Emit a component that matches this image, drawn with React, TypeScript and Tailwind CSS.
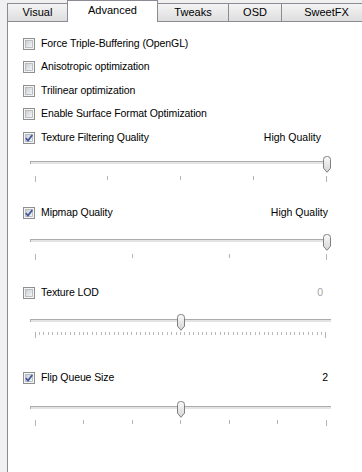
import React from "react";

// Win7-style "Advanced" tab page: checkboxes + trackbars

function Check({ checked }: { checked: boolean }) {
  return (
    <svg width="12" height="12" viewBox="0 0 12 12" className="shrink-0">
      <defs>
        <linearGradient id="cbFill" x1="0" y1="0" x2="1" y2="1">
          <stop offset="0" stopColor="#c9ccd1" />
          <stop offset="1" stopColor="#f7f7f7" />
        </linearGradient>
      </defs>
      <rect x="0.5" y="0.5" width="11" height="11" fill="#f4f4f4" stroke="#8e8f8f" />
      <rect x="2.5" y="2.5" width="7" height="7" fill="url(#cbFill)" stroke="#aeb2b8" strokeWidth="0.8" />
      {checked && (
        <path d="M2.8 6.1 L5 8.6 L9.3 3" fill="none" stroke="#40599a" strokeWidth="1.7" />
      )}
    </svg>
  );
}

function Thumb() {
  return (
    <svg width="10" height="17" viewBox="0 0 10 17">
      <defs>
        <linearGradient id="thFill" x1="0" y1="0" x2="0" y2="1">
          <stop offset="0" stopColor="#fafafa" />
          <stop offset="1" stopColor="#d4d4d4" />
        </linearGradient>
      </defs>
      <path
        d="M1.5 3.5 Q1.5 0.5 4.5 0.5 H5.5 Q8.5 0.5 8.5 3.5 V12.2 L5 16.3 L1.5 12.2 Z"
        fill="url(#thFill)"
        stroke="#808080"
      />
    </svg>
  );
}

function Row({
  label,
  checked,
  right,
  rightClass = "",
  className = "",
}: {
  label: string;
  checked: boolean;
  right?: string;
  rightClass?: string;
  className?: string;
}) {
  return (
    <div className={`flex h-[23.5px] items-center ${className}`}>
      <Check checked={checked} />
      <span className="ml-[6px] text-[10.5px] tracking-[-0.1px]">{label}</span>
      {right && <span className={`ml-auto text-[10.5px] ${rightClass}`}>{right}</span>}
    </div>
  );
}

function Slider({
  ticks,
  value,
  className = "",
  tickClass = "",
  fine = false,
}: {
  ticks: number;
  value: number;
  className?: string;
  tickClass?: string;
  fine?: boolean;
}) {
  const center = 5 + value * 292;
  return (
    <div className={`ml-[7px] w-[301px] ${className}`}>
      <div className="relative flex h-[20px] items-center">
        <div className="h-[3px] w-full border-l border-t border-[#acacac] bg-[#e4e4e4]" />
        <div className="absolute top-[3.5px]" style={{ left: center - 5 }}>
          <Thumb />
        </div>
      </div>
      <div className={`flex h-[6px] items-start justify-between px-[4.5px] ${tickClass}`}>
        {Array.from({ length: ticks }, (_, i) => (
          <div
            key={i}
            className={
              i === 0 || i === ticks - 1
                ? "h-[6px] w-px bg-[#b4b4b4]"
                : fine
                  ? "h-[3px] w-px bg-[#b9b9b9]"
                  : "h-[4px] w-px bg-[#b4b4b4]"
            }
          />
        ))}
      </div>
    </div>
  );
}

export default function App() {
  return (
    <div className="h-[472px] w-[362px] overflow-hidden bg-[#f0f0f0] font-['Liberation_Sans',Arial,sans-serif] text-black">
      <div className="flex h-[21px] items-end pl-[7px] text-[11px]">
        <div className="flex h-[18px] w-[61px] shrink-0 items-center justify-center border-x border-t border-[#898c95] bg-linear-to-b from-[#f4f4f4] to-[#dedede]">
          Visual
        </div>
        <div className="relative z-10 -mb-px -ml-px flex h-[22px] w-[91px] shrink-0 justify-center border-x border-t border-[#898c95] bg-white pt-[1px]">
          Advanced
        </div>
        <div className="flex h-[18px] w-[71px] shrink-0 items-center justify-center border-r border-t border-[#898c95] bg-linear-to-b from-[#f4f4f4] to-[#dedede]">
          Tweaks
        </div>
        <div className="flex h-[18px] w-[53px] shrink-0 items-center justify-center border-r border-t border-[#898c95] bg-linear-to-b from-[#f4f4f4] to-[#dedede]">
          OSD
        </div>
        <div className="flex h-[18px] w-[90px] shrink-0 items-center justify-center border-r border-t border-[#898c95] bg-linear-to-b from-[#f4f4f4] to-[#dedede]">
          SweetFX
        </div>
      </div>

      <div className="ml-[7px] h-[451px] border-l border-t border-[#898c95] bg-white pl-[15px] pt-[10px]">
        <Row label="Force Triple-Buffering (OpenGL)" checked={false} />
        <Row label="Anisotropic optimization" checked={false} />
        <Row label="Trilinear optimization" checked={false} />
        <Row label="Enable Surface Format Optimization" checked={false} />
        <Row label="Texture Filtering Quality" checked right="High Quality" rightClass="pr-[41px]" />
        <Slider ticks={5} value={1} className="mt-[3px]" tickClass="mt-[3.5px]" />

        <Row
          label="Mipmap Quality"
          checked
          right="High Quality"
          rightClass="pr-[34px]"
          className="mt-[19.25px]"
        />
        <Slider ticks={4} value={1} className="mt-[5.75px]" tickClass="mt-[3.5px]" />

        <Row
          label="Texture LOD"
          checked={false}
          right="0"
          rightClass="pr-[39px] text-[#a3a3a3]"
          className="mt-[21.25px]"
        />
        <Slider ticks={67} value={0.5} fine className="mt-[5.25px]" tickClass="mt-[2px]" />

        <Row
          label="Flip Queue Size"
          checked
          right="2"
          rightClass="pr-[34px]"
          className="mt-[28.25px]"
        />
        <Slider ticks={7} value={0.5} className="mt-[7.75px]" tickClass="mt-[2.5px]" />
      </div>
    </div>
  );
}
